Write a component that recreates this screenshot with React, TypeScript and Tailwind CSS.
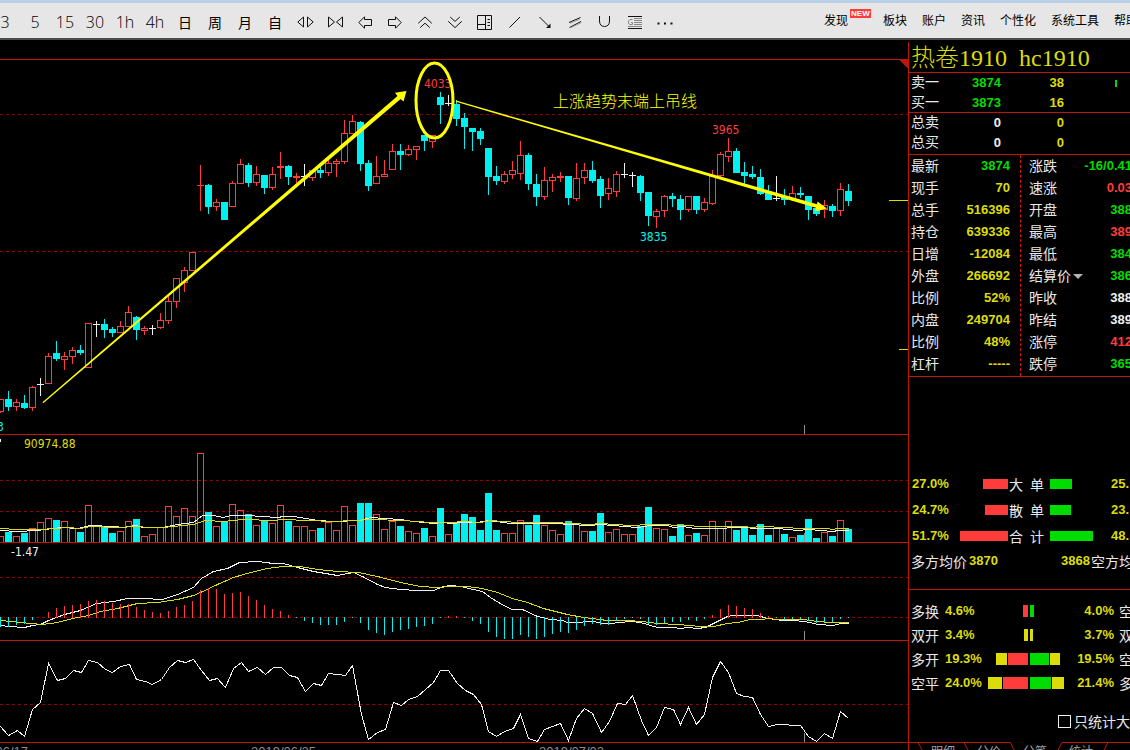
import React from "react";

type Kind = "r" | "c" | "w";
type Candle = [Kind, number, number, number, number];
type Points = number[][];

const RED = "#ff3c3c";
const CYAN = "#00f0f0";
const WHITE = "#f0f0f0";
const YELLOW = "#dcdc0a";
const GRID = "#8c0000";
const STEP = 8;

// kind, high, body top, body bottom, low
const candles: Candle[] = [
  ["r", 399, 399, 411, 413], ["c", 391, 399, 407, 411], ["r", 399, 402, 406, 411], ["c", 395, 403, 408, 409],
  ["r", 386, 387, 407, 411], ["w", 378, 384, 384, 396], ["r", 353, 356, 383, 383], ["c", 341, 353, 359, 361],
  ["r", 352, 356, 359, 370], ["r", 347, 350, 356, 364], ["c", 345, 350, 353, 355], ["r", 323, 323, 367, 367],
  ["w", 321, 324, 324, 337], ["c", 319, 324, 330, 338], ["c", 327, 329, 333, 337], ["r", 321, 326, 332, 332],
  ["r", 306, 312, 326, 326], ["c", 316, 317, 330, 340], ["r", 326, 328, 330, 335], ["w", 325, 328, 328, 335],
  ["r", 313, 320, 327, 329], ["r", 296, 301, 320, 324], ["r", 278, 278, 301, 308], ["r", 267, 270, 282, 292],
  ["r", 252, 252, 270, 270], ["r", 165, 185, 185, 211], ["c", 184, 185, 207, 214], ["r", 199, 202, 206, 211],
  ["c", 202, 202, 220, 220], ["r", 181, 183, 206, 206], ["r", 159, 164, 183, 183], ["c", 163, 165, 183, 187],
  ["r", 166, 174, 182, 186], ["c", 175, 175, 188, 194], ["r", 167, 174, 187, 190], ["r", 152, 166, 167, 179],
  ["c", 165, 166, 177, 185], ["r", 173, 176, 177, 183], ["w", 164, 176, 176, 186], ["r", 170, 170, 177, 181],
  ["c", 167, 170, 173, 178], ["r", 159, 163, 172, 176], ["r", 159, 161, 163, 177], ["r", 120, 133, 161, 164],
  ["r", 115, 121, 133, 133], ["c", 121, 122, 164, 171], ["c", 160, 163, 186, 191], ["r", 156, 176, 183, 183],
  ["r", 160, 174, 176, 176], ["r", 144, 151, 169, 169], ["c", 144, 151, 155, 170], ["r", 145, 149, 154, 156],
  ["r", 146, 146, 149, 160], ["c", 135, 135, 141, 151], ["r", 135, 135, 141, 148], ["c", 92, 97, 105, 124],
  ["w", 95, 103, 103, 106], ["c", 100, 104, 119, 126], ["c", 113, 118, 127, 149], ["c", 128, 128, 132, 151],
  ["c", 128, 131, 139, 145], ["c", 148, 148, 177, 195], ["c", 166, 176, 181, 185], ["r", 171, 174, 181, 184],
  ["r", 161, 170, 174, 179], ["r", 141, 155, 173, 180], ["c", 153, 155, 184, 190], ["c", 174, 184, 197, 206],
  ["r", 167, 180, 196, 200], ["r", 174, 177, 180, 192], ["r", 172, 176, 177, 182], ["c", 176, 176, 198, 205],
  ["r", 163, 178, 198, 201], ["r", 163, 170, 177, 184], ["c", 161, 170, 181, 183], ["c", 176, 179, 196, 208],
  ["r", 178, 188, 193, 200], ["r", 171, 174, 191, 197], ["w", 163, 174, 174, 178], ["w", 172, 175, 175, 187],
  ["c", 175, 176, 193, 201], ["c", 192, 192, 216, 226], ["r", 209, 211, 216, 228], ["r", 195, 196, 210, 217],
  ["c", 193, 196, 199, 207], ["c", 195, 199, 210, 220], ["r", 196, 196, 209, 212], ["c", 196, 196, 210, 214],
  ["r", 198, 202, 209, 212], ["r", 170, 176, 203, 205], ["r", 152, 154, 175, 177], ["r", 138, 151, 156, 162],
  ["c", 148, 151, 173, 173], ["c", 162, 172, 176, 184], ["c", 166, 174, 177, 179], ["c", 169, 177, 194, 195],
  ["c", 185, 192, 200, 200], ["w", 176, 198, 198, 201], ["c", 189, 197, 200, 205], ["r", 186, 193, 199, 201],
  ["c", 187, 193, 195, 198], ["c", 196, 196, 210, 220], ["c", 207, 208, 214, 216], ["r", 200, 205, 209, 218],
  ["c", 204, 206, 211, 217], ["r", 183, 189, 210, 216], ["c", 184, 191, 201, 206],
];

const volumeTops = [
  536, 532, 536, 533, 528, 522, 518, 520, 521, 528, 532, 505, 526, 527, 533, 531, 521, 519, 536, 534, 527, 506, 516,
  508, 516, 453, 512, 526, 522, 504, 510, 514, 525, 521, 523, 505, 521, 526, 526, 530, 528, 522, 530, 506, 525, 503,
  503, 514, 529, 521, 526, 531, 533, 528, 536, 508, 534, 523, 514, 517, 530, 493, 530, 533, 533, 520, 525, 515, 525,
  530, 534, 521, 524, 531, 531, 513, 532, 529, 534, 534, 526, 507, 528, 529, 536, 524, 535, 533, 535, 521, 528, 521,
  530, 527, 535, 524, 535, 528, 534, 537, 535, 519, 538, 532, 536, 520, 529,
];

const histogram = [
  627, 627, 625, 624, 620, 617, 612, 608, 606, 605, 604, 601, 600, 601, 603, 604, 604, 607, 610, 612, 613, 611, 607,
  605, 601, 590, 588, 589, 594, 593, 592, 596, 600, 605, 609, 611, 615, 618, 621, 623, 625, 625, 625, 622, 618, 623,
  630, 633, 635, 632, 630, 629, 627, 626, 624, 618, 616, 616, 618, 621, 624, 632, 637, 639, 639, 635, 637, 639, 637,
  634, 632, 633, 630, 626, 624, 625, 625, 621, 619, 618, 619, 624, 625, 623, 622, 622, 620, 621, 619, 615, 609, 605,
  606, 608, 609, 613, 616, 618, 620, 619, 619, 621, 623, 622, 622, 619, 618,
];

// Traces are stored in thirds of a pixel, in two halves that meet at x = 450.
function trace(top: number, left: Points, right: Points): string {
  const a = left.map(([x, y]) => [x / 3, top + y / 3]);
  const b = right.map(([x, y]) => [450 + x / 3, top + y / 3]);
  return [...a, ...b].map(([x, y]) => `${Math.round(x) + 0.5},${Math.round(y - 0.4) + 0.5}`).join(" ");
}

const volumeFast = trace(
  430,
  [[0, 301], [50, 304], [110, 301], [180, 292], [235, 295], [270, 286], [340, 290], [370, 292], [405, 286], [430, 292], [485, 292], [530, 284], [580, 276], [605, 256], [640, 256], [670, 262], [690, 256], [740, 256], [830, 262], [850, 259], [880, 260], [950, 270], [1000, 274], [1080, 270], [1110, 262], [1200, 268], [1240, 273], [1300, 280], [1325, 276]],
  [[0, 280], [40, 276], [80, 278], [115, 272], [180, 280], [320, 280], [350, 284], [420, 286], [450, 282], [560, 292], [600, 286], [650, 286], [670, 291], [695, 288], [735, 295], [820, 295], [840, 291], [890, 292], [910, 295], [985, 295], [1040, 301], [1075, 298], [1145, 303], [1165, 300], [1195, 300]],
);
const volumeSlow = trace(
  430,
  [[0, 295], [50, 298], [120, 298], [200, 292], [240, 295], [270, 289], [350, 292], [410, 289], [440, 292], [490, 292], [580, 282], [615, 271], [670, 273], [730, 268], [820, 270], [850, 268], [1000, 274], [1110, 268], [1210, 270], [1290, 276]],
  [[0, 277], [40, 274], [90, 276], [120, 271], [200, 277], [310, 277], [420, 283], [450, 280], [540, 286], [600, 283], [720, 287], [740, 290], [880, 289], [905, 292], [930, 289], [1010, 292], [1040, 295], [1130, 295], [1145, 298], [1165, 295], [1195, 295]],
);
const macdFast = trace(
  430,
  [[0, 587], [25, 590], [73, 592], [97, 586], [121, 582], [145, 571], [193, 552], [240, 540], [288, 520], [340, 514], [380, 505], [430, 505], [485, 508], [530, 492], [578, 471], [602, 444], [640, 424], [680, 415], [718, 398], [770, 394], [820, 401], [850, 401], [890, 412], [940, 424], [1010, 436], [1060, 427], [1085, 438], [1130, 463], [1155, 472], [1200, 478], [1250, 481], [1300, 481], [1330, 470]],
  [[0, 466], [30, 470], [70, 478], [95, 485], [120, 503], [160, 527], [187, 538], [215, 538], [260, 560], [300, 568], [335, 570], [352, 577], [385, 577], [410, 574], [430, 574], [455, 580], [480, 580], [510, 577], [540, 574], [570, 577], [620, 592], [670, 592], [690, 596], [715, 592], [740, 596], [765, 592], [790, 580], [830, 560], [850, 556], [920, 556], [950, 565], [1000, 571], [1035, 571], [1080, 577], [1100, 583], [1150, 586], [1170, 580], [1195, 580]],
);
const macdSlow = trace(
  430,
  [[0, 571], [60, 578], [125, 583], [170, 577], [215, 566], [265, 556], [300, 544], [350, 534], [410, 520], [470, 517], [530, 508], [580, 495], [600, 487], [650, 462], [700, 443], [750, 426], [800, 414], [850, 410], [900, 410], [950, 418], [1010, 424], [1075, 426], [1130, 438], [1200, 457], [1260, 468], [1310, 471]],
  [[0, 469], [50, 469], [95, 476], [140, 487], [187, 504], [230, 518], [280, 535], [350, 552], [400, 562], [470, 571], [530, 571], [575, 574], [620, 580], [680, 584], [720, 586], [745, 590], [790, 590], [830, 580], [860, 577], [900, 568], [935, 568], [950, 565], [980, 568], [1060, 568], [1100, 574], [1140, 577], [1195, 577]],
);
const oscillator = trace(
  640,
  [[0, 259], [25, 286], [50, 271], [73, 289], [97, 208], [121, 187], [145, 70], [170, 121], [195, 115], [218, 91], [242, 97], [265, 61], [290, 67], [315, 88], [337, 97], [360, 80], [386, 73], [408, 118], [435, 124], [457, 133], [482, 119], [508, 82], [530, 61], [555, 67], [578, 58], [602, 90], [626, 121], [650, 115], [674, 142], [698, 85], [722, 67], [745, 94], [770, 82], [794, 103], [818, 82], [842, 82], [866, 106], [890, 112], [914, 154], [938, 130], [962, 136], [985, 100], [1010, 103], [1034, 106], [1057, 76], [1082, 222], [1105, 298], [1130, 278], [1154, 267], [1178, 187], [1202, 196], [1225, 178], [1250, 168], [1275, 148], [1298, 127], [1320, 91], [1345, 91]],
  [[0, 100], [20, 131], [45, 151], [68, 163], [92, 194], [115, 275], [139, 290], [163, 275], [188, 264], [211, 223], [235, 294], [260, 304], [283, 268], [307, 260], [331, 250], [355, 300], [379, 236], [403, 206], [427, 219], [452, 277], [476, 243], [500, 190], [524, 193], [547, 166], [572, 240], [595, 287], [619, 262], [643, 202], [668, 209], [691, 252], [715, 203], [739, 252], [763, 223], [787, 112], [811, 64], [835, 97], [859, 160], [883, 169], [907, 173], [931, 223], [955, 259], [980, 253], [1051, 256], [1075, 290], [1099, 304], [1123, 281], [1147, 295], [1171, 214], [1195, 236]],
);

const chartFont = "font-['DejaVu_Sans_Condensed','DejaVu_Sans',sans-serif] text-xs";

function Grid({ y }: { y: number }) {
  return <line x1="0" x2="100%" y1={y + 0.5} y2={y + 0.5} stroke={GRID} strokeDasharray="3 3" />;
}

function Tick({ bottom }: { bottom: number }) {
  return <rect x={804} y={bottom - 9} width={1} height={9} fill="#909090" />;
}

function Trace({ points, color }: { points: string; color: string }) {
  return <polyline points={points} fill="none" stroke={color} strokeWidth={1} />;
}

function Panel({ top, size, label, children }: { top: number; size: string; label: string; children: React.ReactNode }) {
  return (
    <section aria-label={label} className={`${size} overflow-hidden border-b border-[#c01408]`}>
      <svg className="block h-full w-full" shapeRendering="crispEdges">
        <g transform={`translate(0 ${-top})`}>{children}</g>
      </svg>
    </section>
  );
}

function CandleMark({ index, candle }: { index: number; candle: Candle }) {
  const [kind, high, top, bottom, low] = candle;
  const x = index * STEP;
  if (kind === "w") {
    return (
      <g fill={WHITE}>
        <rect x={x} y={high} width={1} height={low - high} />
        <rect x={x - 3} y={top} width={7} height={1} />
      </g>
    );
  }
  if (kind === "c") {
    return (
      <g fill={CYAN}>
        <rect x={x} y={high} width={1} height={low - high} />
        <rect x={x - 3} y={top} width={7} height={bottom - top} />
      </g>
    );
  }
  if (top === bottom) {
    return (
      <g fill={RED}>
        <rect x={x} y={high} width={1} height={low - high} />
        <rect x={x - 3} y={top} width={7} height={1} />
      </g>
    );
  }
  return (
    <g fill={RED}>
      <rect x={x} y={high} width={1} height={top - high} />
      <rect x={x} y={bottom} width={1} height={low - bottom} />
      <rect x={x - 2.5} y={top + 0.5} width={6} height={bottom - top} fill="none" stroke={RED} />
    </g>
  );
}

function PricePanel() {
  return (
    <Panel top={60} size="min-h-0 flex-1" label="K线">
      <Grid y={114} />
      <Grid y={251} />
      <Tick bottom={434} />
      {candles.map((c, i) => (
        <CandleMark key={i} index={i} candle={c} />
      ))}
      <svg x="100%" overflow="visible">
        <path d="M-9 60H0V69Z" fill="#c01408" />
        <rect x={-19} y={200} width={19} height={1} fill={YELLOW} />
        <rect x={-9} y={349} width={9} height={1} fill={YELLOW} />
      </svg>
      <g className={chartFont}>
        <text x={424} y={88} fill={RED}>4033</text>
        <text x={712} y={134} fill={RED}>3965</text>
        <text x={640} y={241} fill={CYAN}>3835</text>
        <text x={-3} y={431} fill={CYAN}>3</text>
      </g>
      <text x={553} y={107} fill="#ffff00" className="font-['Noto_Sans_CJK_SC',sans-serif] text-base font-light">
        上涨趋势末端上吊线
      </text>
      <g fill="#ffff00" shapeRendering="geometricPrecision">
        <path d="M42.4 402.2L397.500 96L395 92.7L406.5 91L403.5 101.5L400.6 99L43.2 403.2Z" />
        <path d="M456 100.6L817 204.2L817.5 201.5L827 208.6L814.8 211.5L816 207.8L456 101.8Z" />
        <ellipse cx={434.5} cy={100.5} rx={18.5} ry={37.5} fill="none" stroke="#ffff00" strokeWidth={3} />
      </g>
    </Panel>
  );
}

function VolumePanel() {
  return (
    <Panel top={435} size="h-[108px] shrink-0" label="成交量">
      <Grid y={480} />
      <Grid y={511} />
      {volumeTops.map((top, i) =>
        candles[i][0] === "c" ? (
          <rect key={i} x={i * STEP - 3} y={top} width={7} height={542 - top} fill={CYAN} />
        ) : (
          <rect key={i} x={i * STEP - 2.5} y={top + 0.5} width={6} height={542 - top} fill="none" stroke={RED} />
        ),
      )}
      <Trace points={volumeFast} color={WHITE} />
      <Trace points={volumeSlow} color={YELLOW} />
      <Tick bottom={542} />
      <rect x={0} y={439} width={1} height={3} fill={WHITE} />
      <text x={24} y={448} fill={YELLOW} className={chartFont}>90974.88</text>
    </Panel>
  );
}

function MacdPanel() {
  return (
    <Panel top={543} size="h-[98px] shrink-0" label="MACD">
      <Grid y={577} />
      <Grid y={617} />
      <Trace points={macdFast} color={WHITE} />
      <Trace points={macdSlow} color={YELLOW} />
      {histogram.map((tip, i) =>
        tip < 617 ? (
          <rect key={i} x={i * STEP} y={tip} width={1} height={618 - tip} fill={RED} />
        ) : (
          <rect key={i} x={i * STEP} y={617} width={1} height={tip - 617} fill={CYAN} />
        ),
      )}
      <Tick bottom={640} />
      <text x={11} y={556} fill={WHITE} className={chartFont}>-1.47</text>
    </Panel>
  );
}

function OscillatorPanel() {
  return (
    <Panel top={641} size="h-[102px] shrink-0" label="指标">
      <Grid y={704} />
      <Trace points={oscillator} color={WHITE} />
      <Tick bottom={742} />
    </Panel>
  );
}

function DateAxis() {
  return (
    <svg className="block h-[7px] w-full shrink-0" aria-label="日期">
      <g fill="#8c8c8c" className="font-['Liberation_Sans',sans-serif] text-[13px]">
        <text x={-37} y={13}>2019/06/17</text>
        <text x={251} y={13}>2019/06/25</text>
        <text x={539} y={13}>2019/07/03</text>
      </g>
    </svg>
  );
}

function Icon({ children }: { children: React.ReactNode }) {
  return (
    <svg width={20} height={16} viewBox="0 0 20 16" fill="none" stroke="#111" strokeWidth={1}>
      {children}
    </svg>
  );
}

const icons: { label: string; art: React.ReactNode }[] = [
  { label: "拉宽", art: <path d="M8.5 3V13L2.8 8ZM12.5 3V13L18.2 8Z" /> },
  { label: "压缩", art: <path d="M3.5 3V13L9.5 8ZM17.5 3V13L11.5 8Z" /> },
  { label: "左移", art: <path d="M3.8 8.5L9.5 2.8V5.5H16.5V11.5H9.5V14.2Z" /> },
  { label: "右移", art: <path d="M16.2 8.5L10.5 2.8V5.5H3.5V11.5H10.5V14.2Z" /> },
  { label: "放大", art: <path d="M3.2 9.3L10 3L16.8 9.3M5.2 13.6L10 9.2L14.8 13.6" /> },
  { label: "缩小", art: <path d="M3.2 7.3L10 13.6L16.8 7.3M5.2 3L10 7.4L14.8 3" /> },
  { label: "布局", art: <path d="M2.5 1.5H16.5V15.5H2.5ZM10.5 1.5V15.5M2.5 10.5H10.5M12.5 5.5H15M12.5 8.5H15M12.5 11.5H15" /> },
  { label: "直线", art: <path d="M4.5 13.5L15 3" /> },
  { label: "箭头", art: <><path d="M4.5 3L14 12.5" /><path d="M15.5 9.5V14H11Z" fill="#111" stroke="none" /></> },
  { label: "平行线", art: <><path d="M4 8.5L15.5 3.5M4.5 13.5L16 7.5" /><path d="M6 13.5L16.5 8.5M5 9.3L15 5" stroke="#999" /></> },
  { label: "弧线", art: <path d="M4.5 2V7C4.5 10.5 6.5 12.5 9.5 12.5S14.5 10.5 14.5 7V2" /> },
  {
    label: "文字",
    art: (
      <>
        <path d="M3 2.5H17M3 14.5H17" />
        <path d="M9 4.5H17M9 6.5H17M9 8.5H17M9 10.5H17M3 12.5H17" stroke="#888" />
        <path d="M7.5 5.5H5L3.5 7V9.5L5 10.5H7.5V8.5H6" stroke="#888" />
      </>
    ),
  },
  { label: "更多", art: <path d="M2.5 8.5H4.5V10.5H2.5ZM9 8.5H11V10.5H9ZM15.5 8.5H17.5V10.5H15.5Z" fill="#111" stroke="none" /> },
];

const periods = ["3", "5", "15", "30", "1h", "4h"];
const spans = ["日", "周", "月", "自"];
const menus = ["板块", "账户", "资讯", "个性化", "系统工具", "帮助"];

function Toolbar() {
  return (
    <header className="flex h-10 shrink-0 items-center border-b-2 border-t-[3px] border-b-[#4c4c4c] border-t-[#b8d0ea] bg-[#e6e6e6] pt-0.5 text-black">
      <div className="-ml-2.5 flex shrink-0 items-center" role="toolbar" aria-label="周期与画线">
        {periods.map((p) => (
          <button key={p} className="h-6 w-[30px] text-center font-['Open_Sans',sans-serif] text-base leading-6 font-light">
            {p}
          </button>
        ))}
        {spans.map((p) => (
          <button key={p} className="h-6 w-[30px] text-center text-sm leading-6">
            {p}
          </button>
        ))}
        {icons.map((icon) => (
          <button key={icon.label} aria-label={icon.label} className="flex h-6 w-[30px] items-center justify-center">
            <Icon>{icon.art}</Icon>
          </button>
        ))}
      </div>
      <nav className="-mr-2 ml-auto flex shrink-0 gap-[15px] pb-1 text-xs leading-5">
        <a href="#discover" className="relative mr-5">
          发现
          <span className="absolute -top-px left-[26px] h-[9px] w-[21px] bg-[#ff3c3c] text-center font-['Liberation_Sans',sans-serif] text-[8px] leading-[9px] font-bold text-white">
            NEW
          </span>
        </a>
        {menus.map((m) => (
          <a key={m} href={`#${m}`}>{m}</a>
        ))}
      </nav>
    </header>
  );
}

const num = "font-['Liberation_Sans',sans-serif] text-[13px] font-bold";
const line = "border-b border-[#c01408]";

function Book({ rows, tone }: { rows: string[][]; tone: string }) {
  return (
    <>
      {rows.map(([label, price, amount]) => (
        <div key={label} className="flex h-5 items-center pl-0.5">
          <span className="w-9 pb-1">{label}</span>
          <span className={`${num} ${tone} w-[54px] text-right`}>{price}</span>
          <span className={`${num} w-[63px] text-right text-[#dcdc0a]`}>{amount}</span>
          {label === "卖一" && <i className="ml-[51px] h-[7px] w-0.5 bg-[#00dc00]" />}
        </div>
      ))}
    </>
  );
}

const G = "text-[#00dc00]";
const R = "text-[#ff3c3c]";
const W = "text-[#f0f0f0]";
const Y = "text-[#dcdc0a]";

const quotes: string[][] = [
  ["最新", "3874", G, "涨跌", "-16/0.41", G],
  ["现手", "70", Y, "速涨", "0.03", R],
  ["总手", "516396", Y, "开盘", "388", G],
  ["持仓", "639336", Y, "最高", "389", R],
  ["日增", "-12084", Y, "最低", "384", G],
  ["外盘", "266692", Y, "结算价", "386", G],
  ["比例", "52%", Y, "昨收", "388", W],
  ["内盘", "249704", Y, "昨结", "389", W],
  ["比例", "48%", Y, "涨停", "412", R],
  ["杠杆", "-----", Y, "跌停", "365", G],
];

const orders = [
  { left: "27.0%", a: 25, name: ["大", "单"], b: 22, right: "25." },
  { left: "24.7%", a: 23, name: ["散", "单"], b: 21, right: "23." },
  { left: "51.7%", a: 48, name: ["合", "计"], b: 43, right: "48." },
];

const flows = [
  { name: "多换", left: "4.6%", outerA: 0, a: 5, b: 4, outerB: 0, right: "4.0%", end: "空" },
  { name: "双开", left: "3.4%", outerA: 4, a: 0, b: 0, outerB: 3, right: "3.7%", end: "双" },
  { name: "多开", left: "19.3%", outerA: 11, a: 20, b: 19, outerB: 10, right: "19.5%", end: "空" },
  { name: "空平", left: "24.0%", outerA: 14, a: 25, b: 21, outerB: 12, right: "21.4%", end: "多" },
];

function Bar({ width, color }: { width: number; color: string }) {
  return width > 0 ? <i className={`h-3 ${color}`} style={{ width }} /> : null;
}

function QuotePanel() {
  return (
    <aside className="mt-0.5 flex w-[222px] shrink-0 flex-col overflow-hidden border-l border-[#c01408] text-sm whitespace-nowrap text-[#e8e8e8]">
      <h1 className={`flex h-[31px] shrink-0 items-center gap-3 pt-px pl-0.5 font-['Liberation_Serif','Noto_Sans_CJK_SC',serif] text-2xl leading-[30px] font-light text-[#dcdc0a] ${line}`}>
        <span>热卷1910</span>
        <span>hc1910</span>
      </h1>
      <div className={`h-10 shrink-0 ${line}`}>
        <Book rows={[["卖一", "3874", "38"], ["买一", "3873", "16"]]} tone="text-[#00dc00]" />
      </div>
      <div className={`h-[42px] shrink-0 ${line}`}>
        <Book rows={[["总卖", "0", "0"], ["总买", "0", "0"]]} tone="text-[#f0f0f0]" />
      </div>
      <div className={`flex h-[222px] shrink-0 ${line}`}>
        <dl className="w-28 shrink-0 border-r border-dashed border-[#e01010] pr-2.5 pl-0.5">
          {quotes.map((q, i) => (
            <div key={i} className="flex h-[22px] items-center justify-between">
              <dt className="pb-0.5">{q[0]}</dt>
              <dd className={`${num} ${q[2]}`}>{q[1]}</dd>
            </div>
          ))}
        </dl>
        <dl className="-mr-0.5 flex-1 pl-2">
          {quotes.map((q, i) => (
            <div key={i} className="flex h-[22px] items-center justify-between">
              <dt className="pb-0.5">
                {q[3] === "结算价" ? (
                  <button className="flex items-center gap-0.5">
                    {q[3]}
                    <svg width={10} height={6} className="mt-1" aria-hidden="true">
                      <path d="M0 0H10L5 5Z" fill="#b4b4b4" />
                    </svg>
                  </button>
                ) : (
                  q[3]
                )}
              </dt>
              <dd className={`${num} ${q[5]}`}>{q[4]}</dd>
            </div>
          ))}
        </dl>
      </div>
      <div className="min-h-0 flex-1" />
      {orders.map((o) => (
        <div key={o.left} className="flex h-[26px] shrink-0 items-center pl-[3px]">
          <span className={`${num} ${Y} w-9 shrink-0`}>{o.left}</span>
          <span className="flex w-[60px] shrink-0 justify-end">
            <i className="h-2.5 bg-[#ff3c3c]" style={{ width: o.a }} />
          </span>
          <span className="flex w-[42px] shrink-0 gap-[7px] pl-px">
            <b className="font-normal">{o.name[0]}</b>
            <b className="font-normal">{o.name[1]}</b>
          </span>
          <span className="w-[61px] shrink-0">
            <i className="block h-2.5 bg-[#00dc00]" style={{ width: o.b }} />
          </span>
          <span className={`${num} ${Y}`}>{o.right}</span>
        </div>
      ))}
      <div className={`flex h-[41px] shrink-0 items-start pt-0.5 pl-0.5 ${line}`}>
        <span className="w-[58px] shrink-0">多方均价</span>
        <span className={`${num} ${Y} w-[92px] shrink-0 leading-5`}>3870</span>
        <span className={`${num} ${Y} w-[30px] shrink-0 leading-5`}>3868</span>
        <span>空方均</span>
      </div>
      <div className="shrink-0 pt-[9px] pb-[15px]">
        {flows.map((f) => (
          <div key={f.name} className="flex h-6 items-center pl-0.5">
            <span className="w-[34px] shrink-0">{f.name}</span>
            <span className={`${num} ${Y} w-9 shrink-0`}>{f.left}</span>
            <span className="flex w-[47px] shrink-0 justify-end gap-px">
              <Bar width={f.outerA} color="bg-[#dcdc0a]" />
              <Bar width={f.a} color="bg-[#ff3c3c]" />
            </span>
            <span className="ml-0.5 flex w-[35px] shrink-0 gap-px">
              <Bar width={f.b} color="bg-[#00dc00]" />
              <Bar width={f.outerB} color="bg-[#dcdc0a]" />
            </span>
            <span className={`${num} ${Y} w-[49px] shrink-0 text-right`}>{f.right}</span>
            <span className="ml-[5px]">{f.end}</span>
          </div>
        ))}
      </div>
      <label className="flex h-[22px] shrink-0 items-center self-end">
        <input type="checkbox" className="mr-[3px] h-[13px] w-[13px] appearance-none border border-[#f0f0f0] bg-black" />
        只统计大
      </label>
      <div className="relative h-[18px] shrink-0 overflow-hidden pt-[11px]">
        <svg className="absolute inset-x-0 bottom-0 h-2 w-full" fill="none" stroke="#c01408" aria-hidden="true">
          <path d="M0 .5H101.500L105 8M153 .5H222M9 .5L13 8M55 .5L59 8M149 8L153 .5M199 .5L195 8" />
        </svg>
        <div className="flex pl-[22px] text-xs leading-4 text-[#a0a0a0]" role="tablist">
          {["明细", "分价", "分笔", "统计"].map((t) => (
            <button key={t} role="tab" className="w-[46px] text-left">{t}</button>
          ))}
        </div>
      </div>
    </aside>
  );
}

export default function App() {
  return (
    <div className="flex h-screen flex-col overflow-hidden bg-black font-['Noto_Sans_CJK_SC',sans-serif]">
      <Toolbar />
      <div className="flex min-h-0 flex-1">
        <main className="flex min-w-0 flex-1 flex-col">
          <div className="h-5 shrink-0 border-b border-[#c01408]" />
          <PricePanel />
          <VolumePanel />
          <MacdPanel />
          <OscillatorPanel />
          <DateAxis />
        </main>
        <QuotePanel />
      </div>
    </div>
  );
}
